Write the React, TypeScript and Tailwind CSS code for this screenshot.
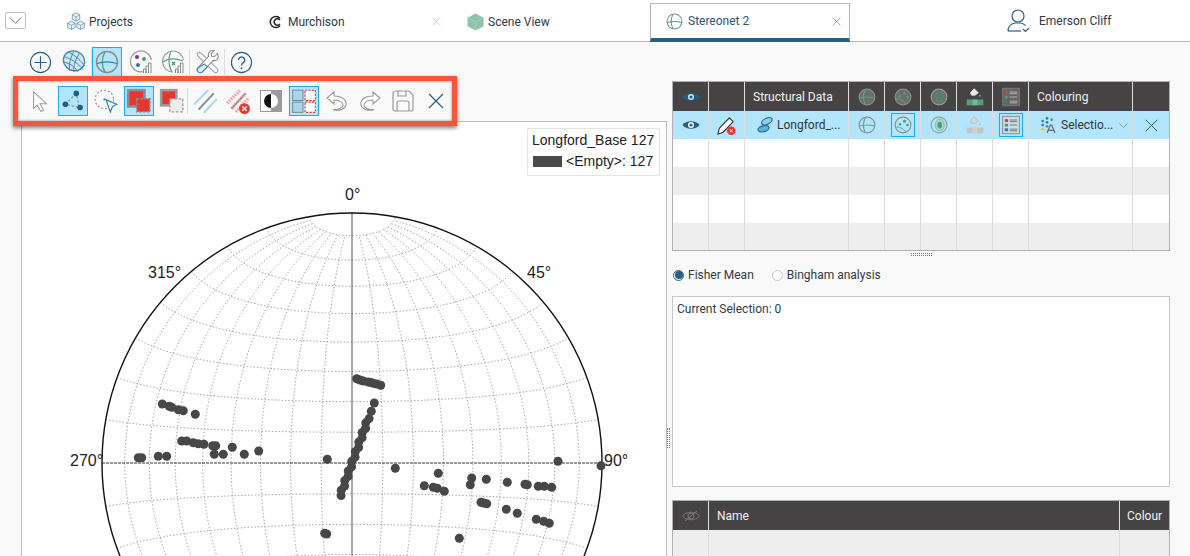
import type { ReactNode } from "react";

const CX = 352;
const CY = 462;
const R = 250;

// transverse equal-area projection, same net as the stereonet view
function project(lat: number, lon: number) {
  const p = (lat * Math.PI) / 180;
  const l = (lon * Math.PI) / 180;
  const k = Math.sqrt(1 / (1 + Math.cos(p) * Math.cos(l)));
  return [CX + R * k * Math.cos(p) * Math.sin(l), CY - R * k * Math.sin(p)];
}

function buildGrid() {
  const parts: string[] = [];
  for (let lat = -80; lat <= 80; lat += 10) {
    if (lat === 0) continue;
    const pts: string[] = [];
    for (let lon = -90; lon <= 90; lon += 2) {
      const [x, y] = project(lat, lon);
      pts.push(`${x.toFixed(1)} ${y.toFixed(1)}`);
    }
    parts.push("M" + pts.join("L"));
  }
  for (let lon = -80; lon <= 80; lon += 10) {
    if (lon === 0) continue;
    const pts: string[] = [];
    for (let lat = -80; lat <= 80; lat += 2) {
      const [x, y] = project(lat, lon);
      pts.push(`${x.toFixed(1)} ${y.toFixed(1)}`);
    }
    parts.push("M" + pts.join("L"));
  }
  return parts.join("");
}

const GRID = buildGrid();

// the steep run of points, nudged side to side so the edge stays beaded
const lineDots: number[][] = [];
for (let i = 0; i <= 16; i++) {
  const t = i / 16;
  const nudge = i % 2 === 0 ? 0.8 : -0.8;
  lineDots.push([340.3 + 28 * t + nudge, 494.3 - 77 * t + nudge * 0.35]);
}

const DOTS: number[][] = [
  ...lineDots,
  [371.3, 410.3], [374.3, 402],
  [356.7, 377.7], [360, 379], [363.3, 380], [368.3, 381], [371, 381.6], [373.3, 382.3], [377, 383], [380.7, 384.3],
  [162.3, 403], [169.3, 405.3], [171.7, 406.3], [178.3, 408.7], [183.3, 409.7], [195.3, 413.3],
  [181.7, 440], [186.7, 440], [193.3, 441.7], [198.3, 442.7], [204, 443.3], [212.7, 444.7], [215.7, 444.7],
  [214.3, 453.3], [223.3, 453.3], [232.3, 446.3], [244.3, 453.3], [258.7, 450],
  [138.3, 456.7], [141.7, 456.7], [158.3, 455.3], [166.7, 455.3],
  [327.3, 458.3], [324.7, 532.3], [326.7, 533],
  [395.3, 467.3], [438.3, 472.3], [424.3, 484.7], [433.3, 486.3], [437.3, 487.3], [444.3, 490.3],
  [471.7, 477], [470.3, 483.7], [486.3, 478.3], [507.3, 481.3], [525, 483.3], [527.3, 483.7],
  [538.3, 485.3], [544.3, 485.3], [551.7, 486.3], [558, 460.3], [601, 464.7],
  [481, 501.3], [483.7, 502], [486.7, 502.7], [506.3, 508.3], [517.3, 512.3],
  [536.3, 518.3], [543.7, 520.3], [549.3, 522.3], [459.3, 537.3],
];

function Ic({ s = 24, children }: { s?: number; children: ReactNode }) {
  return (
    <svg width={s} height={s} viewBox="0 0 24 24" fill="none" className="shrink-0">
      {children}
    </svg>
  );
}

function Btn({ on, children }: { on?: boolean; children?: ReactNode }) {
  return (
    <div
      className={
        on
          ? "w-[30px] h-[30px] flex items-center justify-center bg-[#b3e5fc] border border-[#1eaaf0]"
          : "w-[30px] h-[30px] flex items-center justify-center"
      }
    >
      {children}
    </div>
  );
}

function Stereo({ s = 24, green, dark }: { s?: number; green?: boolean; dark?: boolean }) {
  return (
    <Ic s={s}>
      <circle cx="12" cy="12" r="10.5" fill={dark ? "#6d6d6d" : "none"} stroke="#8c8c8c" strokeWidth="1.5" />
      <path d="M10 1.8C6.5 8 6.5 16 10 22.2" stroke="#5aa583" strokeWidth="1.5" />
      <path d="M1.8 13.5C8 11.5 16 11.5 22.2 13.5" stroke={green ? "#5aa583" : "#2d82b0"} strokeWidth="1.3" />
    </Ic>
  );
}

function StereoDots({ dark }: { dark?: boolean }) {
  return (
    <Ic s={18}>
      <circle cx="12" cy="12" r="10.5" fill={dark ? "#6d6d6d" : "none"} stroke="#8c8c8c" strokeWidth="1.5" />
      <path d="M2 15c5-1 9 1 14 6" stroke="#5aa583" strokeWidth="1.3" />
      <circle cx="14" cy="7" r="2" fill="#4a9e78" />
      <circle cx="18" cy="12" r="1.8" fill="#4a9e78" />
      <circle cx="8" cy="11" r="1.6" fill="#4a9e78" />
    </Ic>
  );
}

function Contour({ dark }: { dark?: boolean }) {
  return (
    <Ic s={18}>
      <circle cx="12" cy="12" r="10.5" fill={dark ? "#6d6d6d" : "none"} stroke="#9a9a9a" strokeWidth="1.5" />
      <ellipse cx="13" cy="12" rx="6" ry="8" fill={dark ? "#5f7d70" : "#a8d8c4"} stroke={dark ? "#5f8272" : "#6fb497"} />
      <ellipse cx="13" cy="12" rx="3" ry="4.5" fill={dark ? "#4f8069" : "#4f9c7b"} />
    </Ic>
  );
}

function Fill({ dark }: { dark?: boolean }) {
  return (
    <Ic s={20}>
      <path d="M11 2l5 5-4 3H8L6.5 7z" fill={dark ? "#e8e8e8" : "#d8d8d8"} stroke={dark ? "#fff" : "#aaa"} strokeWidth=".7" />
      <circle cx="18" cy="10.5" r="1.3" fill={dark ? "#5aa583" : "#c0c0c0"} />
      <rect x="2" y="15" width="20" height="7" fill={dark ? "#5a9a7f" : "#c4c4c4"} />
      <rect x="9" y="15" width="6" height="7" fill={dark ? "#74b59a" : "#d0d0d0"} />
    </Ic>
  );
}

function LegendIcon({ dark }: { dark?: boolean }) {
  return (
    <Ic s={20}>
      <rect x="2" y="1.5" width="20" height="21" fill={dark ? "#666666" : "#c8dfe9"} stroke="#808080" />
      <rect x="4.5" y="5" width="4" height="3.4" fill="#e5372f" />
      <rect x="4.5" y="10.5" width="4" height="3.4" fill="#4a9e60" />
      <rect x="4.5" y="16" width="4" height="3.4" fill="#2d78b0" />
      <path d="M10.5 6h9M10.5 8h9M10.5 12h9M10.5 17h9M10.5 19h9" stroke={dark ? "#bdbdbd" : "#666"} />
    </Ic>
  );
}

function Eye({ color, pupil }: { color: string; pupil: string }) {
  return (
    <svg width="18" height="12" viewBox="0 0 18 12">
      <path d="M0.5 6C4 1 14 1 17.5 6C14 11 4 11 0.5 6Z" fill={color} />
      <circle cx="9" cy="6" r="3" fill={pupil} />
      <circle cx="9" cy="6" r="1.6" fill={color} />
    </svg>
  );
}

function ThinX({ s, color }: { s: number; color: string }) {
  return (
    <svg width={s} height={s} viewBox="0 0 16 16">
      <path d="M1 1L15 15M15 1L1 15" stroke={color} strokeWidth="1.2" />
    </svg>
  );
}

function Cube({ x, y }: { x: number; y: number }) {
  return (
    <g transform={`translate(${x} ${y})`}>
      <path d="M0 -5L4.500 -2.500V2.500L0 5L-4.500 2.500V-2.500Z" fill="#eef5fa" stroke="#4b86ab" strokeWidth=".9" />
      <path d="M0 0L4.500 -2.500M0 0L-4.500 -2.500M0 0V5" stroke="#4b86ab" strokeWidth=".8" />
    </g>
  );
}

function Cell({ children, on }: { children?: ReactNode; on?: boolean }) {
  return (
    <div className="flex items-center justify-center border-r border-[#dcdcdc] last:border-r-0">
      {on ? (
        <div className="w-[24px] h-[24px] flex items-center justify-center border border-[#1eaaf0]">{children}</div>
      ) : (
        children
      )}
    </div>
  );
}

const COLS = "grid grid-cols-[36px_36px_104px_36px_36px_36px_36px_36px_104px_36px]";

function EmptyRow({ shade, h }: { shade?: boolean; h: string }) {
  return (
    <div className={`${COLS} ${h} ${shade ? "bg-[#eeeeee]" : "bg-white"}`}>
      {Array.from({ length: 10 }).map((_, i) => (
        <Cell key={i} />
      ))}
    </div>
  );
}

function StereoPlot() {
  return (
    <svg width="667" height="514" viewBox="0 42 667 514" className="block absolute left-[-22px] top-[-79px]">
      <path d={GRID} fill="none" stroke="#a2a2a2" strokeWidth="1" strokeDasharray="1.4 2" />
      <path d={`M${CX - R} ${CY}H${CX + R}`} stroke="#333" strokeWidth="1" strokeDasharray="3 1" />
      <path d={`M${CX} ${CY - R}V${CY + R}`} stroke="#555" strokeWidth="1" />
      <circle cx={CX} cy={CY} r={R} fill="none" stroke="#111" strokeWidth="1.4" />
      {DOTS.map(([x, y], i) => (
        <circle key={i} cx={x} cy={y} r="4.5" fill="#474747" />
      ))}
      <g fontFamily="'Liberation Sans', sans-serif" fontSize="16" fill="#222">
        <text x="345" y="199">0°</text>
        <text x="148" y="277">315°</text>
        <text x="527" y="277">45°</text>
        <text x="70" y="465">270°</text>
        <text x="604" y="465">90°</text>
      </g>
    </svg>
  );
}

export default function App() {
  return (
    <div className="w-[1190px] h-[556px] overflow-hidden bg-[#f9f9f9] flex flex-col font-['Roboto',sans-serif] text-[12px] text-[#2d3a46]">
      <header className="h-[42px] shrink-0 bg-white border-b border-[#b4b4b4] flex items-end">
        <div className="w-[50px] h-full pl-[5px] pt-[12px]">
          <div className="w-[21px] h-[17px] border border-[#c0c0c0] rounded-[2px] flex items-center justify-center">
            <svg width="13" height="7" viewBox="0 0 13 7">
              <path d="M0.5 0.5L6.5 6L12.5 0.5" fill="none" stroke="#777" />
            </svg>
          </div>
        </div>
        <div className="w-[200px] h-full pl-[16px] pt-[2px] flex items-center gap-[3px]">
          <Ic s={20}>
            <Cube x={12} y={6} />
            <Cube x={6.5} y={16} />
            <Cube x={17.5} y={16} />
          </Ic>
          <span>Projects</span>
        </div>
        <div className="w-[200px] h-full pl-[18px] pr-[8px] pt-[2px] flex items-center">
          <svg width="14" height="14" viewBox="0 0 14 14" className="mr-[6px]">
            <path d="M12 3.200A5.600 5.600 0 1 0 12 10.800" fill="none" stroke="#222" strokeWidth="1.500" />
            <path d="M12 5.200A3.200 3.200 0 1 0 12 8.800" fill="none" stroke="#222" strokeWidth="1.500" />
          </svg>
          <span>Murchison</span>
          <span className="ml-auto mr-[1px]">
            <ThinX s={9} color="#bdbdbd" />
          </span>
        </div>
        <div className="w-[200px] h-full pl-[17px] pt-[2px] flex items-center gap-[4px]">
          <svg width="17" height="18" viewBox="0 0 17 18">
            <path d="M8.500 0.500L16.500 4.800V13.200L8.500 17.500L0.500 13.200V4.800Z" fill="#8fc4aa" />
            <path d="M8.500 9L16.500 4.800M8.500 9L0.500 4.800M8.500 9V17.500" stroke="#a6d2bd" strokeWidth=".8" />
          </svg>
          <span>Scene View</span>
        </div>
        <div className="w-[200px] h-[39px] bg-white border border-[#b4b4b4] border-b-[4px] border-b-[#2a5f85] pl-[15px] pr-[8px] flex items-center gap-[5px] mb-[-1px] text-[#2b5470]">
          <Stereo s={17} />
          <span>Stereonet 2</span>
          <span className="ml-auto">
            <ThinX s={9} color="#5d8aa8" />
          </span>
        </div>
        <div className="h-full flex items-center pl-[157px] gap-[9px]">
          <svg width="23" height="26" viewBox="0 0 23 26" fill="none" stroke="#2a5f85" strokeWidth="1.200">
            <circle cx="11" cy="8" r="6" />
            <path d="M1 23c0-5 4-8 8-8h4c2 0 4 1 5.500 2.500" />
            <path d="M1 23h13" />
            <path d="M16 21l2.500 2.500L22 20" />
          </svg>
          <span>Emerson Cliff</span>
        </div>
      </header>

      <div className="flex-1 flex min-h-0">
        <div className="w-[667px] shrink-0 flex flex-col">
          <div className="h-[34px] pt-[5px] pl-[25px] flex items-start">
            <Btn>
              <Ic s={23}>
                <circle cx="12" cy="12" r="10.500" stroke="#2a5f85" strokeWidth="1.200" />
                <path d="M12 5.500v13M5.500 12h13" stroke="#2a5f85" strokeWidth="1.200" />
              </Ic>
            </Btn>
            <div className="ml-[4px]">
              <Btn>
                <Ic s={26}>
                  <ellipse cx="11.500" cy="11" rx="10" ry="9" fill="#cfe6f2" stroke="#3f86ad" strokeWidth="1.200" transform="rotate(25 12 12)" />
                  <path d="M3 7c6 2 13 6 17 12M2.500 12c5 1 10 4 13 9M7 3c6 3 12 8 15 13M12 2c-3 5-5 12-4 18M17 4c-3 5-6 11-5 17" stroke="#3f86ad" strokeWidth=".9" />
                </Ic>
              </Btn>
            </div>
            <div className="w-px h-[26px] bg-[#dddddd] mt-[2px] ml-[2px]" />
            <Btn on>
              <Stereo s={24} />
            </Btn>
            <div className="ml-[4px]">
              <Btn>
                <Ic s={24}>
                  <path d="M15 21.500A10.500 10.500 0 1 1 22.400 10" stroke="#9a9a9a" strokeWidth="1.200" />
                  <circle cx="8" cy="7" r="2" fill="#8e2a8e" />
                  <circle cx="15" cy="9" r="2" fill="#4a9e78" />
                  <circle cx="9" cy="15" r="2" fill="#2d78b0" />
                  <path d="M14.500 23v-4h2.500v4M17 23v-7h2.500v7M19.500 23v-10H22v10" stroke="#8c8c8c" strokeWidth="1" />
                </Ic>
              </Btn>
            </div>
            <div className="ml-[2px]">
              <Btn>
                <Ic s={24}>
                  <path d="M12 22A10.500 10.500 0 1 1 22.400 10" stroke="#9a9a9a" strokeWidth="1.200" />
                  <path d="M2 12c5-4 13-4 20-1" stroke="#5aa583" strokeWidth="1.300" />
                  <path d="M9.500 2.500c-2 5-2 12 1 19" stroke="#5aa583" strokeWidth="1.300" />
                  <path d="M11 12l3 3M14 12l-3 3" stroke="#3c9a6d" strokeWidth="1.300" />
                  <path d="M14.500 23v-4h2.500v4M17 23v-7h2.500v7M19.500 23v-10H22v10" stroke="#8c8c8c" strokeWidth="1" />
                </Ic>
              </Btn>
            </div>
            <div className="w-px h-[26px] bg-[#dddddd] mt-[2px] ml-px mr-[2px]" />
            <Btn>
              <Ic s={25}>
                <path d="M2 4l2-2 3 2 14.500 14a2.200 2.200 0 0 1-3 3.200L4 7z" stroke="#9a9a9a" fill="#fff" />
                <path d="M21.500 3.500l-3 3-2.500-.5-.5-2.500 3-3c-3-1-6.500 1.500-5.500 5.500L3 17a2.500 2.500 0 0 0 4 4L17.500 10c3.500 1 6-2.500 4-6.500z" stroke="#8c8c8c" fill="#fff" />
                <path d="M9 13.500L3 17a2.500 2.500 0 0 0 4 4l5-5z" stroke="#3f86ad" fill="#dcecf5" />
              </Ic>
            </Btn>
            <div className="w-px h-[26px] bg-[#dddddd] mt-[2px] ml-[2px] mr-px" />
            <Btn>
              <Ic s={23}>
                <circle cx="12" cy="12" r="10.500" stroke="#2a5f85" strokeWidth="1.200" />
                <path d="M8.800 9.500a3.300 3.300 0 1 1 5 2.800c-1.300.8-1.800 1.400-1.800 2.700" stroke="#2a5f85" strokeWidth="1.400" />
                <circle cx="12" cy="18" r="1" fill="#2a5f85" />
              </Ic>
            </Btn>
          </div>

          <div className="relative z-10 ml-[13px] w-[444px] h-[50px] shrink-0 border-[5px] border-[#f9553a] bg-[#f9f9f9] pl-[7px] pt-[5px] flex gap-[3px] shadow-[0_2px_4px_rgba(0,0,0,0.5),inset_0_0_3px_rgba(0,0,0,0.45)]">
            <Btn>
              <Ic s={22}>
                <path d="M5 2l14 13h-7l4 7-3 1.500-4-7L5 20z" stroke="#9a9a9a" fill="#fff" strokeWidth="1.100" />
              </Ic>
            </Btn>
            <Btn on>
              <Ic s={26}>
                <path d="M15 5L5 15l13 3z" stroke="#7d8f9b" strokeDasharray="2.500 1.500" />
                <circle cx="15" cy="5" r="2.600" fill="#1f5f85" />
                <circle cx="5" cy="15" r="2.600" fill="#1f5f85" />
                <circle cx="18.500" cy="18" r="2.600" fill="#1f5f85" />
              </Ic>
            </Btn>
            <Btn>
              <Ic s={26}>
                <circle cx="10.500" cy="10.500" r="8.500" stroke="#8c8c8c" strokeDasharray="1.800 1.800" />
                <circle cx="10.500" cy="10.500" r="1" fill="#4a8fb5" />
                <path d="M12 11l10 4-4 2-2 5z" stroke="#2a7fae" fill="#fff" strokeWidth="1.100" />
              </Ic>
            </Btn>
            <Btn on>
              <Ic s={26}>
                <rect x="2" y="2" width="15" height="15" fill="#e5372f" stroke="#8c8c8c" strokeWidth="2.400" />
                <rect x="10" y="10" width="12" height="12" fill="#e5372f" stroke="#8c8c8c" strokeWidth="1.400" strokeDasharray="2.500 1" />
              </Ic>
            </Btn>
            <Btn>
              <Ic s={26}>
                <rect x="2" y="2" width="14" height="14" fill="#e5372f" stroke="#9a9a9a" strokeWidth="2.400" />
                <rect x="10" y="10" width="12" height="12" fill="#ececec" stroke="#9a9a9a" strokeWidth="1.200" strokeDasharray="2.500 1.500" />
              </Ic>
            </Btn>
            <div className="relative">
              <div className="absolute left-[-3px] top-[2px] w-px h-[26px] bg-[#dddddd]" />
              <Btn>
                <Ic s={26}>
                  <path d="M2 15L15 2M6 20L20 5M11 23L23 10" stroke="#d4eef9" strokeWidth="3" />
                  <path d="M2 15L15 2M11 23L23 10" stroke="#a9cfe2" strokeWidth="1" />
                  <path d="M6 20L20 5" stroke="#8c8c8c" strokeWidth="1.600" />
                </Ic>
              </Btn>
            </div>
            <Btn>
              <Ic s={26}>
                <path d="M2 14L14 2M6 19L19 5M10 22L22 9" stroke="#f0a0a0" strokeWidth="3" strokeDasharray="1.500 1" />
                <path d="M6 19L19 5" stroke="#9a9a9a" strokeWidth="1.500" />
                <circle cx="18" cy="19" r="5" fill="#e5372f" />
                <path d="M16 17l4 4M20 17l-4 4" stroke="#fff" strokeWidth="1.200" />
              </Ic>
            </Btn>
            <Btn>
              <Ic s={24}>
                <rect x="1.500" y="1.500" width="21" height="21" fill="#fff" stroke="#9a9a9a" />
                <rect x="12" y="1.500" width="10.500" height="21" fill="#9a9a9a" />
                <path d="M12 5a7 7 0 0 0 0 14z" fill="#111" />
                <path d="M12 5a7 7 0 0 1 0 14z" fill="#fff" />
              </Ic>
            </Btn>
            <Btn on>
              <Ic s={26}>
                <rect x="1.500" y="2" width="9.500" height="9.500" fill="#a9d6ec" stroke="#808d96" />
                <rect x="1.500" y="13" width="9.500" height="9.500" fill="#a9d6ec" stroke="#808d96" />
                <rect x="13" y="2" width="9.500" height="9.500" fill="#fff" stroke="#e5372f" strokeDasharray="2 1.200" />
                <rect x="13" y="13" width="9.500" height="9.500" fill="#fff" stroke="#e5372f" strokeDasharray="2 1.200" />
              </Ic>
            </Btn>
            <Btn>
              <Ic s={24}>
                <path d="M2 9l7-6v4c7 0 13 3 12 9-1 4-6 6-12 5l-1-.500c6 .500 10-1.500 10-4.500 0-3-4-5-9-5v4z" stroke="#9a9a9a" fill="#fff" strokeWidth="1.100" />
              </Ic>
            </Btn>
            <Btn>
              <Ic s={24}>
                <path d="M22 9l-7-6v4C8 7 2 10 3 16c1 4 6 6 12 5l1-.500c-6 .500-10-1.500-10-4.500 0-3 4-5 9-5v4z" stroke="#9a9a9a" fill="#fff" strokeWidth="1.100" />
              </Ic>
            </Btn>
            <Btn>
              <Ic s={24}>
                <path d="M2 4a2 2 0 0 1 2-2h14l4 4v14a2 2 0 0 1-2 2H4a2 2 0 0 1-2-2z" stroke="#9a9a9a" strokeWidth="1.200" />
                <path d="M7 2v5h8V2M6 22v-8a2 2 0 0 1 2-2h8a2 2 0 0 1 2 2v8" stroke="#9a9a9a" strokeWidth="1.200" />
              </Ic>
            </Btn>
            <Btn>
              <ThinX s={16} color="#2a5f85" />
            </Btn>
          </div>

          <div className="relative flex-1 mt-[-5px] ml-[21px] bg-white border-l border-r border-t border-[#bdbdbd] overflow-hidden">
            <StereoPlot />
            <div className="absolute left-[505px] top-[6px] w-[133px] h-[48px] bg-white border border-[#e4e4e4] rounded-[2px] pl-[4px] pt-[1px] text-[14px] leading-[21px] text-[#222] font-['Liberation_Sans',sans-serif]">
              <div>Longford_Base 127</div>
              <div className="flex items-center">
                <div className="w-[29px] h-[11px] bg-[#4a4a4a] ml-px mr-[4px]" />
                <span>&lt;Empty&gt;: 127</span>
              </div>
            </div>
          </div>
        </div>

        <div className="relative w-[504px] shrink-0 pl-[5px] pt-[39px]">
          <div className="absolute left-[0px] top-[386px] w-[3px] h-[20px] border-x border-dotted border-[#777]" />
          <div className="w-[498px] border border-[#b0b0b0] bg-white">
            <div className={`${COLS} h-[29px] bg-[#454344] text-[#f2f2f2]`}>
              <Cell>
                <Eye color="#1f5f85" pupil="#d9e7ef" />
              </Cell>
              <Cell />
              <div className="flex items-center pl-[8px] border-r border-[#dcdcdc]">Structural Data</div>
              <Cell>
                <Stereo s={18} green dark />
              </Cell>
              <Cell>
                <StereoDots dark />
              </Cell>
              <Cell>
                <Contour dark />
              </Cell>
              <Cell>
                <Fill dark />
              </Cell>
              <Cell>
                <LegendIcon dark />
              </Cell>
              <div className="flex items-center pl-[8px] border-r border-[#dcdcdc]">Colouring</div>
              <Cell />
            </div>
            <div className={`${COLS} h-[28px] bg-[#b3e5fc]`}>
              <Cell>
                <Eye color="#1f5f85" pupil="#ffffff" />
              </Cell>
              <Cell>
                <Ic s={23}>
                  <path d="M3 21l1.500-6L15 4l4 4L8.500 19z" fill="#fff" stroke="#333" strokeWidth="1.100" />
                  <circle cx="17" cy="17.500" r="4.500" fill="#e5372f" />
                  <path d="M15.300 15.800l3.400 3.400M18.700 15.800l-3.400 3.400" stroke="#fff" />
                </Ic>
              </Cell>
              <div className="flex items-center pl-[11px] gap-[3px] border-r border-[#dcdcdc]">
                <Ic s={18}>
                  <ellipse cx="14.500" cy="7" rx="7.500" ry="4" fill="#8fcde8" stroke="#1f6f9a" strokeWidth="1.600" transform="rotate(-25 14.500 7)" />
                  <ellipse cx="10" cy="17" rx="7.500" ry="4" fill="#5bb3d8" stroke="#1f6f9a" strokeWidth="1.600" transform="rotate(-15 10 17)" />
                </Ic>
                <span className="text-[#333]">Longford_...</span>
              </div>
              <Cell>
                <Stereo s={18} green />
              </Cell>
              <Cell on>
                <StereoDots />
              </Cell>
              <Cell>
                <Contour />
              </Cell>
              <Cell>
                <Fill />
              </Cell>
              <Cell on>
                <LegendIcon />
              </Cell>
              <div className="flex items-center pl-[12px] border-r border-[#dcdcdc] text-[#333]">
                <Ic s={16}>
                  <g fill="#2d78b0">
                    <circle cx="2.500" cy="6" r="2" />
                    <circle cx="2.500" cy="12" r="2" />
                    <circle cx="9" cy="2" r="2" />
                    <circle cx="9" cy="8" r="2" />
                  </g>
                  <circle cx="2.500" cy="18" r="2" fill="#f2c400" />
                  <circle cx="16" cy="4" r="2" fill="#4a9e78" />
                  <circle cx="9" cy="14" r="2" fill="#4a9e78" />
                  <path d="M9 24l5-12h2l5 12M11 20h8" stroke="#667" strokeWidth="1.800" />
                </Ic>
                <span className="ml-[4px]">Selectio...</span>
                <svg width="9" height="5" viewBox="0 0 9 5" className="ml-[6px]">
                  <path d="M0.500 0.500L4.500 4.500L8.500 0.500" fill="none" stroke="#8a9aa5" />
                </svg>
              </div>
              <Cell>
                <ThinX s={13} color="#2a5f85" />
              </Cell>
            </div>
            <EmptyRow h="h-[28px]" />
            <EmptyRow shade h="h-[28px]" />
            <EmptyRow h="h-[28px]" />
            <EmptyRow shade h="h-[27px]" />
          </div>

          <div className="w-[498px] h-[5px] flex justify-center items-center mt-[1px]">
            <div className="w-[21px] h-[3px] border-y border-dotted border-[#777]" />
          </div>

          <div className="flex items-center h-[20px] mt-[8px] pl-px">
            <div className="w-[11px] h-[11px] rounded-full border border-[#2a5f85] flex items-center justify-center">
              <div className="w-[8px] h-[8px] rounded-full bg-[#2a5f85]" />
            </div>
            <span className="ml-[4px]">Fisher Mean</span>
            <div className="w-[11px] h-[11px] rounded-full border border-[#c9c9c9] bg-white ml-[18px]" />
            <span className="ml-[4px]">Bingham analysis</span>
          </div>

          <div className="w-[498px] h-[191px] mt-[11px] bg-white border border-[#c8c8c8] pl-[4px] pt-[3px]">
            Current Selection: 0
          </div>

          <div className="w-[498px] mt-[13px] border-t border-x border-[#b0b0b0]">
            <div className="grid grid-cols-[36px_1fr_49px] h-[29px] bg-[#454344] text-[#f2f2f2]">
              <div className="flex items-center justify-center border-r border-[#dcdcdc]">
                <svg width="18" height="12" viewBox="0 0 18 12" fill="none" stroke="#777">
                  <path d="M0.500 6C4 1 14 1 17.500 6C14 11 4 11 0.500 6Z" />
                  <circle cx="9" cy="6" r="3" />
                  <path d="M3 11L15 1" />
                </svg>
              </div>
              <div className="flex items-center pl-[8px] border-r border-[#dcdcdc]">Name</div>
              <div className="flex items-center pl-[7px]">Colour</div>
            </div>
            <div className="grid grid-cols-[36px_1fr_49px] h-[28px] bg-[#eeeeee]">
              <div className="border-r border-[#dcdcdc]" />
              <div className="border-r border-[#dcdcdc]" />
              <div />
            </div>
          </div>
        </div>
      </div>
    </div>
  );
}
